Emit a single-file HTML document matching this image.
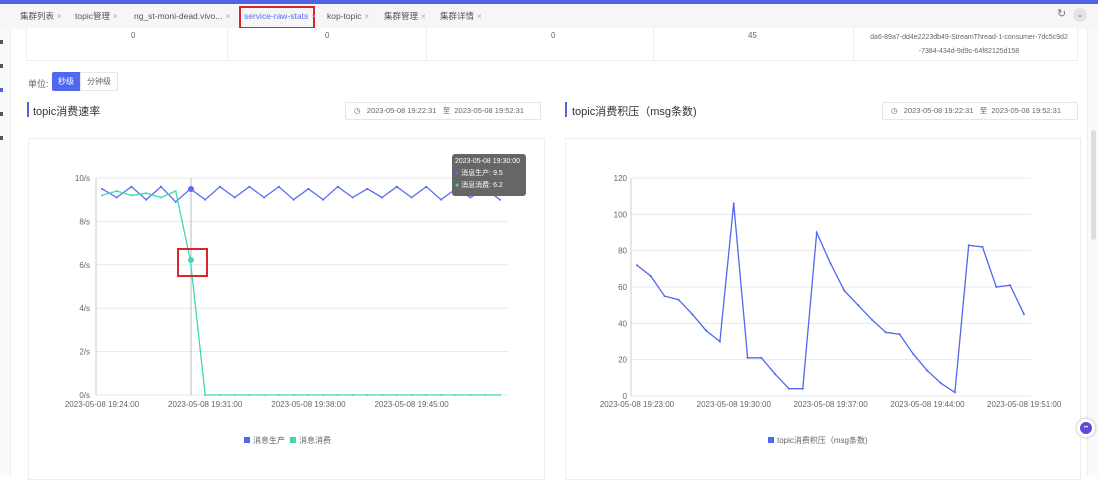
<!DOCTYPE html>
<html><head><meta charset="utf-8"><style>
body{margin:0;width:1098px;height:476px;overflow:hidden;background:#fff;font-family:"Liberation Sans","Noto Sans CJK SC",sans-serif;position:relative}
.abs{position:absolute}
.tab{position:absolute;top:10px;font-size:8.5px;color:#555;white-space:nowrap;line-height:12px}
.tab i{font-style:normal;color:#aaa;font-size:8px;margin-left:3px}
.card{position:absolute;border:1px solid #eceef2;background:#fff}
.t{font-size:9px;color:#666;position:absolute}
.date{position:absolute;height:16px;border:1px solid #e6e6e6;border-radius:2px;font-size:7.5px;color:#666;line-height:16px;padding-left:8px;width:186px;white-space:nowrap}
</style></head><body>
<div class="abs" style="left:0;top:0;width:1098px;height:4px;background:#4f63e6"></div>
<div class="abs" style="left:0;top:4px;width:1098px;height:25px;background:#f6f6f7"></div>
<div class="tab" style="left:20px">集群列表<i>×</i></div>
<div class="tab" style="left:75px">topic管理<i>×</i></div>
<div class="tab" style="left:134px">ng_st-moni-dead.vivo...<i>×</i></div>
<div class="abs" style="left:239px;top:6px;width:76px;height:23px;border:2px solid #d9262c;box-sizing:border-box"></div>
<div class="tab" style="left:244px;color:#5b6cf0">service-raw-stats<i>×</i></div>
<div class="tab" style="left:327px">kop-topic<i>×</i></div>
<div class="tab" style="left:384px">集群管理<i>×</i></div>
<div class="tab" style="left:440px">集群详情<i>×</i></div>
<div class="tab" style="left:1057px;font-size:11px;top:8px;color:#777">↻</div>
<div class="abs" style="left:1073px;top:8px;width:14px;height:14px;border-radius:7px;background:#e4e4e6;font-size:8px;color:#666;text-align:center;line-height:14px">⌄</div>
<div class="abs" style="left:0;top:29px;width:10px;height:447px;background:#fafafa;border-right:1px solid #eee"></div>
<div class="abs" style="left:0;top:40px;width:3px;height:4px;background:#555"></div>
<div class="abs" style="left:0;top:64px;width:3px;height:4px;background:#555"></div>
<div class="abs" style="left:0;top:88px;width:3px;height:4px;background:#4f63e6"></div>
<div class="abs" style="left:0;top:112px;width:3px;height:4px;background:#555"></div>
<div class="abs" style="left:0;top:136px;width:3px;height:4px;background:#555"></div>
<div class="abs" style="left:1087px;top:29px;width:11px;height:447px;background:#fafafa;border-left:1px solid #eee"></div>
<div class="abs" style="left:1091px;top:130px;width:5px;height:110px;background:#ddd;border-radius:3px"></div>
<div class="card" style="left:26px;top:28px;width:1050px;height:32px;border-top:none"></div>
<div class="abs" style="left:227px;top:28px;width:1px;height:32px;background:#eee"></div>
<div class="abs" style="left:426px;top:28px;width:1px;height:32px;background:#eee"></div>
<div class="abs" style="left:653px;top:28px;width:1px;height:32px;background:#eee"></div>
<div class="abs" style="left:853px;top:28px;width:1px;height:32px;background:#eee"></div>
<div class="t" style="left:131px;top:31px;font-size:8px">0</div>
<div class="t" style="left:325px;top:31px;font-size:8px">0</div>
<div class="t" style="left:551px;top:31px;font-size:8px">0</div>
<div class="t" style="left:748px;top:31px;font-size:8px">45</div>
<div class="t" style="left:860px;top:31px;width:218px;text-align:center;font-size:7px;line-height:14px">da6-89a7-dd4e2223db49-StreamThread-1-consumer-7dc5c9d2<br>-7384-434d-9d9c-64f82125d158</div>
<div class="t" style="left:28px;top:77px">单位:</div>
<div class="abs" style="left:52px;top:72px;width:28px;height:19px;background:#4f68f0;border-radius:2px 0 0 2px;color:#fff;font-size:8px;text-align:center;line-height:19px">秒级</div>
<div class="abs" style="left:80px;top:72px;width:36px;height:17px;border:1px solid #e6e6e6;border-radius:0 2px 2px 0;color:#666;font-size:8px;text-align:center;line-height:17px">分钟级</div>
<div class="abs" style="left:27px;top:102px;width:2px;height:15px;background:#4f63e6"></div>
<div class="abs" style="left:33px;top:103px;font-size:11px;color:#333">topic消费速率</div>
<div class="abs" style="left:565px;top:102px;width:2px;height:15px;background:#4f63e6"></div>
<div class="abs" style="left:572px;top:103px;font-size:11px;color:#333">topic消费积压（msg条数)</div>
<div class="date" style="left:345px;top:102px">◷ &nbsp; 2023-05-08 19:22:31 &nbsp; 至 &nbsp;2023-05-08 19:52:31</div>
<div class="date" style="left:882px;top:102px">◷ &nbsp; 2023-05-08 19:22:31 &nbsp; 至 &nbsp;2023-05-08 19:52:31</div>
<div class="card" style="left:28px;top:138px;width:515px;height:340px"></div>
<div class="card" style="left:565px;top:138px;width:514px;height:340px"></div>
<svg class="abs" style="left:0;top:0" width="1098" height="476" id="s" font-family="Liberation Sans" font-size="8" fill="#666"></svg>
<div class="abs" style="left:452px;top:154px;width:74px;height:42px;background:#666;border-radius:3px;color:#fff;font-size:7px;line-height:12px;padding:2px 3px;box-sizing:border-box;white-space:nowrap;overflow:hidden">2023-05-08 19:30:00<br><span style="color:#5b6cf0">●</span> 消息生产: 9.5<br><span style="color:#3fd9b0">●</span> 消息消费: 6.2</div>
<div class="abs" style="left:177px;top:248px;width:31px;height:29px;border:2px solid #d9262c;box-sizing:border-box"></div>
<div class="abs" style="left:1077px;top:419px;width:18px;height:18px;border-radius:9px;background:#fff;box-shadow:0 0 3px #aaa"><div style="margin:3px;width:12px;height:12px;border-radius:6px;background:#5b4bd6;color:#fff;font-size:6px;text-align:center;line-height:12px">••</div></div>
<script>
var s=document.getElementById('s'),h='';
function L(x1,y1,x2,y2,c,w){h+='<line x1="'+x1+'" y1="'+y1+'" x2="'+x2+'" y2="'+y2+'" stroke="'+c+'" stroke-width="'+(w||1)+'"/>';}
function T(x,y,t,a){h+='<text x="'+x+'" y="'+y+'" text-anchor="'+(a||'middle')+'">'+t+'</text>';}
for(var i=0;i<=5;i++){var y=395-i*43.4;L(96,y,508,y,'#e8e8e8');T(90,y+3,(i*2)+'/s','end');}
L(96,178,96,395,'#ccc');L(191,178,191,395,'#bbb');
['19:24:00','19:31:00','19:38:00','19:45:00'].forEach(function(t,k){T(102+k*103.2,407,'2023-05-08 '+t);});
var b=[9.5,9.1,9.6,9.0,9.6,8.9,9.5,9.0,9.6,9.1,9.6,9.1,9.6,9.0,9.5,9.0,9.6,9.1,9.5,9.1,9.6,9.1,9.6,9.0,9.5,9.1,9.5,9.0];
var g=[9.2,9.4,9.2,9.3,9.1,9.4,6.2];while(g.length<28)g.push(0);
function P(a,x0,dx,y0,k,c){var p=a.map(function(v,i){return (x0+i*dx).toFixed(1)+','+(y0-v*k).toFixed(1)}).join(' ');h+='<polyline points="'+p+'" fill="none" stroke="'+c+'" stroke-width="1.3"/>';a.forEach(function(v,i){h+='<circle cx="'+(x0+i*dx)+'" cy="'+(y0-v*k)+'" r="1" fill="'+c+'"/>';});}
P(b,102,14.74,395,21.7,'#5b6cf0');P(g,102,14.74,395,21.7,'#3fd9b0');
h+='<circle cx="191" cy="189" r="3" fill="#5b6cf0"/><circle cx="191" cy="260" r="3" fill="#3fd9b0"/>';
h+='<rect x="244" y="437" width="6" height="6" fill="#4f68f0"/><rect x="290" y="437" width="6" height="6" fill="#3fd9b0"/>';
T(253,443,'消息生产','start');T(299,443,'消息消费','start');
for(var i=0;i<=6;i++){var y=396-i*36.33;L(631,y,1031,y,'#e8e8e8');T(627,y+3,i*20,'end');}
L(631,178,631,396,'#ccc');
['19:23:00','19:30:00','19:37:00','19:44:00','19:51:00'].forEach(function(t,k){T(637+k*96.8,407,'2023-05-08 '+t);});
var r=[72,66,55,53,45,36,30,106,21,21,12,4,4,90,73,58,50,42,35,34,23,14,7,2,83,82,60,61,45];
P(r,637,13.82,396,1.8167,'#4f68f0');
h+='<rect x="768" y="437" width="6" height="6" fill="#4f68f0"/>';T(777,443,'topic消费积压（msg条数)','start');
s.innerHTML=h;
</script>
</body></html>
